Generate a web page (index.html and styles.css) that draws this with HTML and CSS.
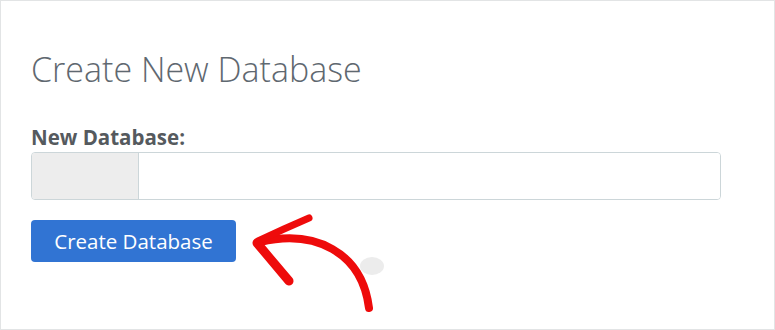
FILE: index.html
```html
<!DOCTYPE html>
<html>
<head>
<meta charset="utf-8">
<link rel="stylesheet" href="styles.css">
</head>
<body>
<div class="panel">
  <h1 class="title">Create New Database</h1>
  <label class="label" for="db">New Database:</label>
  <div class="input-group">
    <span class="addon"></span>
    <input id="db" class="field" type="text">
  </div>
  <button class="btn">Create Database</button>
  <span class="blob"></span>
  <svg class="arrow" viewBox="240 200 160 130" width="160" height="130">
    <path d="M260 242 C 315 229, 362 252, 369 308" fill="none" stroke="#ee0b0b" stroke-width="8" stroke-linecap="round"/>
    <path d="M258 241 L 284 229 L 309 218" fill="none" stroke="#ee0b0b" stroke-width="7" stroke-linecap="round" stroke-linejoin="round"/>
    <path d="M257 243 L 289 281" fill="none" stroke="#ee0b0b" stroke-width="9" stroke-linecap="round"/>
  </svg>
</div>
</body>
</html>
```
FILE: styles.css
```css
* { box-sizing: border-box; }
html, body { margin: 0; padding: 0; background: #fff; }
body { font-family: "Open Sans", "Liberation Sans", sans-serif; }
.panel {
  position: relative;
  width: 775px;
  height: 330px;
  border: 1px solid #e2e4e5;
  padding: 48px 0 0 30px;
  display: flex;
  flex-direction: column;
  align-items: flex-start;
}
.title {
  margin: 0;
  font-size: 34px;
  line-height: 40px;
  font-weight: 300;
  color: #5f6870;
}
.label {
  margin-top: 35px;
  font-size: 20.5px;
  line-height: 26px;
  font-weight: 700;
  color: #555a5e;
}
.input-group {
  margin-top: 2px;
  display: flex;
  width: 690px;
  height: 48px;
  border: 1px solid #ccd6d9;
  border-radius: 4px;
  overflow: hidden;
}
.addon {
  width: 107px;
  background: #ededed;
  border-right: 1px solid #ccd6d9;
}
.field {
  flex: 1;
  border: 0;
  outline: none;
  background: #fff;
}
.btn {
  margin-top: 20px;
  width: 205px;
  height: 42px;
  border: 0;
  border-radius: 4px;
  background: #3174d3;
  color: #fff;
  font-family: "Open Sans", "Liberation Sans", sans-serif;
  font-size: 20.5px;
  padding: 0;
}
.blob {
  position: absolute;
  left: 359px;
  top: 256px;
  width: 24px;
  height: 18px;
  border-radius: 50%;
  background: #ececec;
}
.arrow {
  position: absolute;
  left: 239px;
  top: 199px;
}
```
